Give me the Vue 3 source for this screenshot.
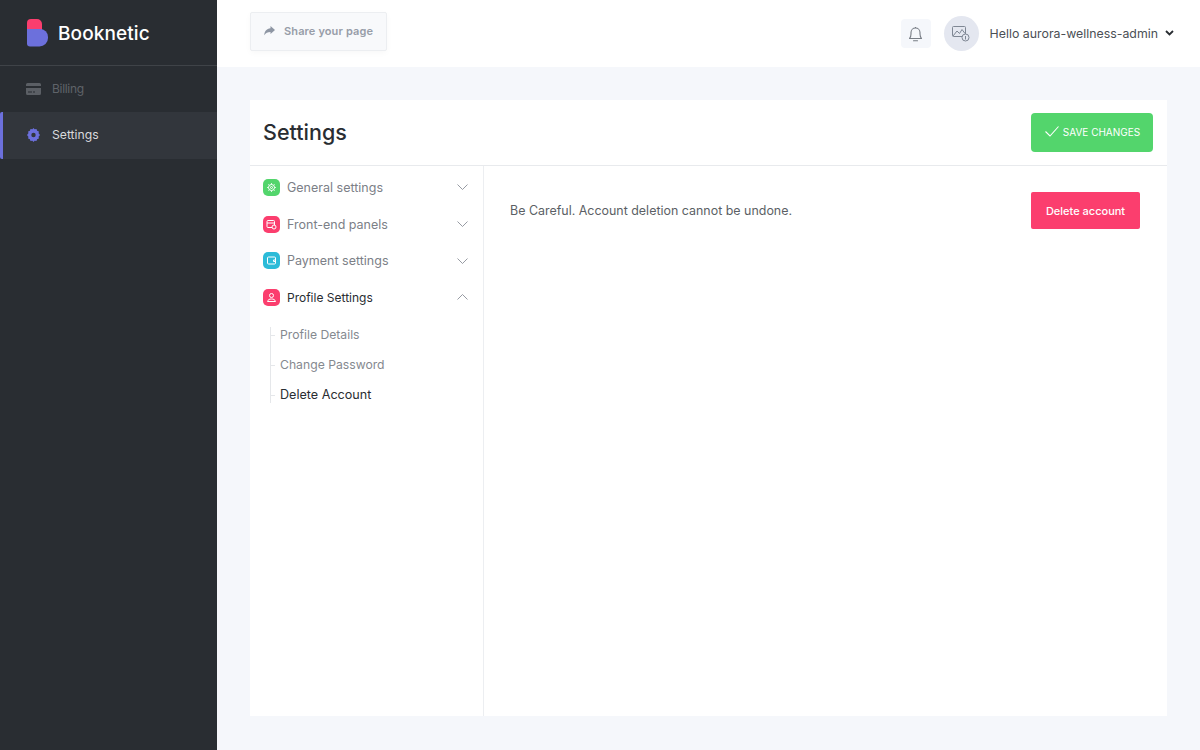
<script setup>
const menu = [
  { label: 'General settings', color: '#53d56c', icon: 'gear', open: false },
  { label: 'Front-end panels', color: '#fb3e6e', icon: 'panel', open: false },
  { label: 'Payment settings', color: '#2bbbd8', icon: 'wallet', open: false },
  { label: 'Profile Settings', color: '#fb3e6e', icon: 'user', open: true }
]
const subs = [
  { label: 'Profile Details', active: false },
  { label: 'Change Password', active: false },
  { label: 'Delete Account', active: true }
]
</script>

<template>
  <div class="app">
    <aside class="sidebar">
      <div class="brand">
        <svg class="logo" width="22" height="28" viewBox="0 0 22 28">
          <path d="M1 4a4 4 0 0 1 4-4h6a5 5 0 0 1 5 5v6H1z" fill="#fb3e6e" />
          <path d="M1 10h13a8 8 0 0 1 8 8v1a8.500 8.500 0 0 1-8.500 8.500H4a3 3 0 0 1-3-3z" fill="#6c70dc" />
        </svg>
        <span class="brand-name">Booknetic</span>
      </div>
      <nav class="nav">
        <a class="nav-item">
          <svg width="15" height="12" viewBox="0 0 15 12">
            <path d="M1.500 0h12A1.500 1.500 0 0 1 15 1.500V3H0V1.500A1.500 1.500 0 0 1 1.500 0zM0 5h15v5.500a1.500 1.500 0 0 1-1.500 1.500h-12A1.500 1.500 0 0 1 0 10.500zm2 3.500v1h4v-1zm5 0v1h2v-1z" fill="#5b5f65" fill-rule="evenodd" />
          </svg>
          <span>Billing</span>
        </a>
        <a class="nav-item active">
          <svg width="13" height="14" viewBox="0 0 13 14">
            <path d="M6.500 0l1.100 1.300 1.900-.3.600 1.800 1.800.6-.3 1.900L13 7l-1.400 1.700.3 1.900-1.800.6-.6 1.800-1.900-.3L6.500 14l-1.100-1.300-1.900.3-.6-1.800-1.800-.6.3-1.900L0 7l1.400-1.700-.3-1.900 1.800-.6.6-1.800 1.900.3zm0 4.800a2.200 2.200 0 1 0 0 4.400 2.200 2.200 0 0 0 0-4.400z" fill="#6c70dc" fill-rule="evenodd" />
          </svg>
          <span>Settings</span>
        </a>
      </nav>
    </aside>

    <div class="main">
      <header class="topbar">
        <button class="share">
          <svg width="11" height="10" viewBox="0 0 11 10">
            <path d="M6.500 0L11 4 6.500 8V6C3.500 6 1.800 6.700 .3 9.300 .3 5.500 2.500 2.600 6.500 2.200z" fill="#8e96a3" />
          </svg>
          <span>Share your page</span>
        </button>
        <div class="top-right">
          <div class="bell">
            <svg width="15" height="16" viewBox="0 0 15 16" fill="none" stroke="#777d85" stroke-width="1.100">
              <path d="M1.500 12.500c1-1.200 1.500-2 1.500-4.500V6.500a4.500 4.500 0 0 1 9 0V8c0 2.500.5 3.300 1.500 4.500z" stroke-linejoin="round" />
              <path d="M5.500 14.800h4" stroke-linecap="round" />
              <path d="M7.500 1v1" />
            </svg>
          </div>
          <div class="avatar">
            <svg width="18" height="17" viewBox="0 0 18 17" fill="none" stroke="#7f8794" stroke-width="1">
              <rect x="0.500" y="1.500" width="13" height="10" rx="1" />
              <path d="M1 11l4-5 2.500 2.500L10 4.500l3 4" />
              <circle cx="13.500" cy="12.500" r="3.500" fill="#e4e7f0" />
              <path d="M13.500 11v3.500" />
            </svg>
          </div>
          <span class="hello">Hello aurora-wellness-admin</span>
          <svg class="caret" width="9" height="6" viewBox="0 0 9 6" fill="none" stroke="#292d32" stroke-width="1.800">
            <path d="M1 1l3.500 3.500L8 1" />
          </svg>
        </div>
      </header>

      <div class="content">
        <section class="card">
          <div class="card-head">
            <h1>Settings</h1>
            <button class="save">
              <svg width="14" height="11" viewBox="0 0 14 11" fill="none" stroke="#fff" stroke-width="1.100">
                <path d="M.5 5.500l4.500 4.500L13.500.5" />
              </svg>
              <span>SAVE CHANGES</span>
            </button>
          </div>
          <div class="card-body">
            <div class="side-menu">
              <div v-for="m in menu" :key="m.label" class="menu-row" :class="{ open: m.open }">
                <span class="menu-icon" :style="{ background: m.color }">
                  <svg width="11" height="11" viewBox="0 0 11 11" fill="none" stroke="#fff" stroke-width="1">
                    <template v-if="m.icon === 'gear'">
                      <circle cx="5.500" cy="5.500" r="3" />
                      <circle cx="5.500" cy="5.500" r="1" />
                      <path d="M5.500 1v1.500M5.500 8.500V10M1 5.500h1.500M8.500 5.500H10M2.300 2.300l1 1M7.700 7.700l1 1M2.300 8.700l1-1M7.700 3.300l1-1" stroke-width="0.800" />
                    </template>
                    <template v-else-if="m.icon === 'panel'">
                      <rect x="1" y="1.500" width="7.500" height="7" rx="1" />
                      <path d="M1 4h7.500" />
                      <circle cx="8" cy="8" r="2" :fill="m.color" />
                    </template>
                    <template v-else-if="m.icon === 'wallet'">
                      <rect x="1.500" y="2" width="8" height="7" rx="1" />
                      <path d="M9.500 5H7.500v1.500h2" />
                    </template>
                    <template v-else>
                      <circle cx="5.500" cy="3.500" r="2" />
                      <path d="M1.500 9.500c.5-2 2-2.500 4-2.500s3.500.5 4 2.500z" />
                    </template>
                  </svg>
                </span>
                <span class="menu-label">{{ m.label }}</span>
                <svg class="chev" width="11" height="6" viewBox="0 0 11 6" fill="none" stroke="#8b9098" stroke-width="0.900">
                  <path :d="m.open ? 'M.5 5.500l5-5 5 5' : 'M.5.500l5 5 5-5'" />
                </svg>
              </div>
              <div class="subs">
                <a v-for="s in subs" :key="s.label" class="sub" :class="{ active: s.active }">{{ s.label }}</a>
              </div>
            </div>
            <div class="panel">
              <p>Be Careful. Account deletion cannot be undone.</p>
              <button class="delete">Delete account</button>
            </div>
          </div>
        </section>
      </div>
    </div>
  </div>
</template>

<style>
body { margin: 0; }
</style>

<style scoped>
.app {
  display: flex;
  width: 1200px;
  height: 750px;
  overflow: hidden;
  font-family: Inter, "Open Sans", sans-serif;
  background: #f5f7fb;
}
.sidebar {
  width: 217px;
  flex: none;
  background: #292d32;
}
.brand {
  height: 65px;
  display: flex;
  align-items: center;
  gap: 10px;
  padding-left: 26px;
  border-bottom: 1px solid #3f4348;
}
.logo { margin-top: 1px; }
.brand-name {
  color: #fff;
  font-size: 19px;
  font-weight: 500;
  letter-spacing: 0.1px;
  margin-top: 2px;
}
.nav-item {
  height: 46px;
  display: flex;
  align-items: center;
  gap: 11px;
  padding: 0 0 2px 26px;
  color: #5f6369;
  font-size: 12px;
  letter-spacing: -0.300px;
  box-sizing: border-box;
}
.nav-item svg { margin-top: 1px; }
.nav-item.active {
  height: 47px;
  background: #32363c;
  color: #d9dadc;
  border-left: 3px solid #6c70dc;
  border-radius: 2px 0 0 2px;
  padding-left: 24px;
  gap: 12px;
  font-size: 12.200px;
  letter-spacing: 0;
}
.main {
  flex: 1;
  display: flex;
  flex-direction: column;
  min-width: 0;
}
.topbar {
  height: 67px;
  flex: none;
  background: #fff;
  display: flex;
  align-items: center;
  justify-content: space-between;
  padding: 0 26px 1px 33px;
  box-sizing: border-box;
}
.share {
  width: 137px;
  height: 39px;
  display: flex;
  align-items: center;
  gap: 9px;
  padding: 0 0 1px 13px;
  margin-bottom: 3px;
  background: #f8f9fb;
  border: 1px solid #eceef1;
  border-radius: 2px;
  box-shadow: 0 2px 6px rgba(0, 0, 0, 0.03);
  color: #979da8;
  font-family: Inter, sans-serif;
  font-size: 11px;
  font-weight: 600;
  letter-spacing: 0.130px;
}
.top-right {
  display: flex;
  align-items: center;
}
.bell {
  width: 30px;
  height: 29px;
  margin-top: 1px;
  display: flex;
  align-items: center;
  justify-content: center;
  background: #f5f7fb;
  border-radius: 4px;
}
.avatar {
  width: 35px;
  height: 35px;
  margin-left: 13px;
  display: flex;
  align-items: center;
  justify-content: center;
  background: #e4e7f0;
  border-radius: 50%;
}
.hello {
  margin-left: 11px;
  color: #4b4f55;
  font-size: 12.350px;
}
.caret { margin-left: 7px; }
.content {
  flex: 1;
  padding: 33px 33px 34px;
  min-height: 0;
  display: flex;
}
.card {
  flex: 1;
  background: #fff;
  display: flex;
  flex-direction: column;
}
.card-head {
  height: 66px;
  flex: none;
  box-sizing: border-box;
  border-bottom: 1px solid #e8eaed;
  display: flex;
  align-items: center;
  justify-content: space-between;
  padding: 0 14px 0 13px;
}
h1 {
  margin: 0 0 2px;
  font-size: 21.500px;
  font-weight: 500;
  color: #292d32;
}
.save {
  width: 122px;
  height: 39px;
  display: flex;
  align-items: center;
  justify-content: center;
  gap: 4px;
  padding: 0 0 2px 1px;
  background: #53d56c;
  border: 0;
  border-radius: 4px;
  color: #fff;
  font-family: Inter, sans-serif;
  font-size: 10px;
  font-weight: 400;
}
.card-body {
  flex: 1;
  display: flex;
  min-height: 0;
}
.side-menu {
  width: 234px;
  flex: none;
  box-sizing: border-box;
  border-right: 1px solid #eceef1;
  padding: 3.200px 15px 0 13px;
}
.menu-row {
  height: 36.600px;
  display: flex;
  align-items: center;
  color: #7c8087;
  font-size: 12.500px;
}
.menu-row.open { color: #292d32; font-size: 12px; }
.menu-icon {
  width: 17px;
  height: 17px;
  border-radius: 5px;
  display: flex;
  align-items: center;
  justify-content: center;
  margin-right: 7px;
  flex: none;
}
.menu-label { flex: 1; }
.subs {
  position: relative;
  margin: 4px 0 0 7px;
  display: flex;
  flex-direction: column;
}
.subs::before {
  content: "";
  position: absolute;
  left: 0;
  top: 7px;
  bottom: 7px;
  width: 1px;
  background: #e5e7ea;
}
.sub {
  position: relative;
  height: 30px;
  display: flex;
  align-items: center;
  padding-left: 10px;
  color: #85898f;
  font-size: 12.200px;
}
.sub::before {
  content: "";
  position: absolute;
  left: 0;
  top: 50%;
  width: 5px;
  height: 1px;
  background: #e5e7ea;
}
.sub.active { color: #292d32; font-size: 12.600px; }
.panel {
  flex: 1;
  display: flex;
  align-items: flex-start;
  justify-content: space-between;
  padding: 26px 27px 0 26px;
}
.panel p {
  margin: 0;
  height: 37px;
  line-height: 37px;
  color: #5b5f65;
  font-size: 12.450px;
}
.delete {
  width: 109px;
  height: 37px;
  background: #fb3e6e;
  border: 0;
  border-radius: 2px;
  color: #fff;
  font-family: Inter, sans-serif;
  font-size: 11px;
  font-weight: 500;
}
</style>
